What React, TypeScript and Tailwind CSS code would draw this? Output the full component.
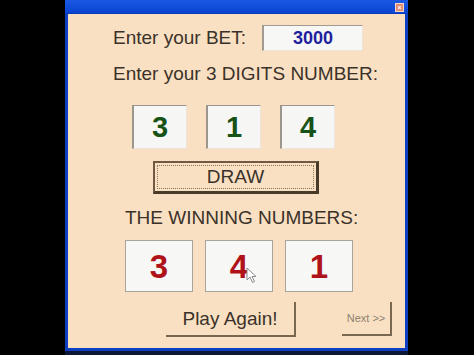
import React from "react";

const font = { fontFamily: '"Liberation Sans", Arial, sans-serif' };

function DigitBox({ v }: { v: string }) {
  return (
    <div className="w-[55px] h-[44px] bg-[#f6f6f4] border-l-2 border-t border-[#9c978e] border-r border-r-[#ece6da] border-b border-b-[#ece6da] flex items-center justify-center text-[29px] font-bold text-[#175217] leading-none">
      {v}
    </div>
  );
}

function WinBox({ v, cursor }: { v: string; cursor?: boolean }) {
  return (
    <div className="relative w-[68px] h-[52px] bg-[#f7f7f6] border border-[#a9a49b] flex items-center justify-center text-[33px] font-bold text-[#b0121a] leading-none">
      {v}
      {cursor && (
        <svg className="absolute left-[40px] top-[26px]" width="11" height="17" viewBox="0 0 11 17">
          <path d="M1 1 L1 13 L4 10 L6.5 15.5 L8.5 14.5 L6 9.5 L10 9.5 Z" fill="#ffffff" stroke="#8a8a8a" strokeWidth="1" strokeLinejoin="round" />
        </svg>
      )}
    </div>
  );
}

export default function App() {
  return (
    <div className="w-[474px] h-[355px] bg-black flex overflow-hidden" style={font}>
      <div className="w-[65px] shrink-0" />
      <div className="w-[343px] shrink-0 flex flex-col">
        {/* title bar */}
        <div className="h-[14px] bg-gradient-to-b from-[#1a58e4] to-[#0a44d2] flex items-start justify-end pr-[4px] pt-[3px] border-b border-[#0a3cb8]">
          <div className="w-[9px] h-[9px] bg-[#e08a72] border border-[#f6d8c4] flex items-center justify-center text-[7px] leading-none text-white font-bold">
            ×
          </div>
        </div>
        {/* body */}
        <div className="h-[337px] bg-[#fae0c2] border-l-[3px] border-r-[3px] border-b-[3px] border-[#0e3fc0] text-[#3a322a] text-[19px] leading-[22px]">
          {/* bet row */}
          <div className="flex items-center pl-[45px] mt-[11px]">
            <div className="w-[149px]">Enter your BET:</div>
            <div className="w-[101px] h-[26px] bg-[#f7f7f5] border-l-2 border-t border-[#a09a90] border-r border-r-[#ede6d8] border-b border-b-[#ede6d8] flex items-center justify-center text-[18px] font-bold text-[#1f1f9e]">
              3000
            </div>
          </div>
          <div className="pl-[45px] mt-[12px]">Enter your 3 DIGITS NUMBER:</div>
          <div className="flex gap-[19px] pl-[64px] mt-[20px]">
            <DigitBox v="3" />
            <DigitBox v="1" />
            <DigitBox v="4" />
          </div>
          <div className="pl-[85px] mt-[12px]">
            <div className="w-[166px] h-[33px] border-t-2 border-l-2 border-[#6e5a42] border-r-[3px] border-b-[3px] border-r-[#4a3a28] border-b-[#4a3a28] p-[2px]">
              <div className="w-full h-full border border-dotted border-[#8c7658] flex items-center justify-center text-[19px] text-[#3a322a]">
                DRAW
              </div>
            </div>
          </div>
          <div className="pl-[57px] mt-[13px]">THE WINNING NUMBERS:</div>
          <div className="flex gap-[12px] pl-[57px] mt-[11px]">
            <WinBox v="3" />
            <WinBox v="4" cursor />
            <WinBox v="1" />
          </div>
          <div className="flex items-start mt-[10px] pl-[98px]">
            <div className="w-[130px] h-[35px] border-r-2 border-b-2 border-[#7a6750] flex items-center justify-center text-[19px] text-[#3a322a]">
              Play Again!
            </div>
            <div className="ml-[46px] w-[50px] h-[34px] border-r-2 border-b-2 border-[#7a6750] flex items-center justify-center text-[11px] text-[#8a8070]">
              Next &gt;&gt;
            </div>
          </div>
        </div>
        <div className="flex-1 bg-[#0c1836]" />
      </div>
      <div className="flex-1" />
    </div>
  );
}
